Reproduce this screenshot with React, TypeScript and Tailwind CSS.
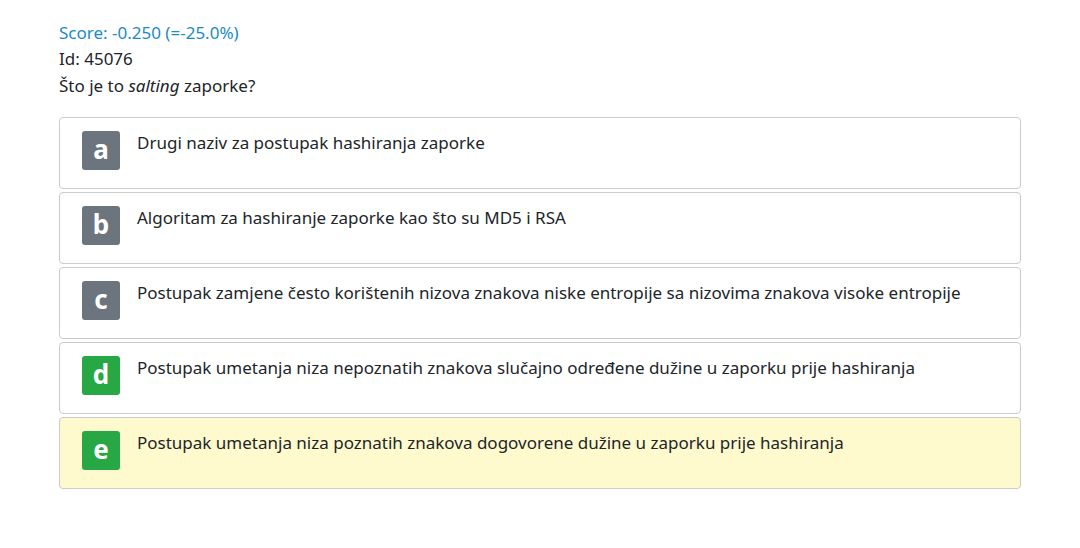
const answers = [
  { letter: 'a', text: 'Drugi naziv za postupak hashiranja zaporke', tone: 'gray', picked: false },
  { letter: 'b', text: 'Algoritam za hashiranje zaporke kao što su MD5 i RSA', tone: 'gray', picked: false },
  { letter: 'c', text: 'Postupak zamjene često korištenih nizova znakova niske entropije sa nizovima znakova visoke entropije', tone: 'gray', picked: false },
  { letter: 'd', text: 'Postupak umetanja niza nepoznatih znakova slučajno određene dužine u zaporku prije hashiranja', tone: 'green', picked: false },
  { letter: 'e', text: 'Postupak umetanja niza poznatih znakova dogovorene dužine u zaporku prije hashiranja', tone: 'green', picked: true },
]

export default function App() {
  return (
    <div className="w-[1080px] h-[548px] bg-white text-[#212529] font-['Noto_Sans',sans-serif] text-[17px]">
      <div className="pl-[59px] pr-[59px] pt-[20px]">
        <div className="leading-[26px] text-[#1b8bc6]">Score: -0.250 (=-25.0%)</div>
        <div className="leading-[26px]">Id: 45076</div>
        <div className="leading-[28px]">
          Što je to <i>salting</i> zaporke?
        </div>
        <div className="mt-[17px] flex flex-col gap-[3px]">
          {answers.map((a) => (
            <div
              key={a.letter}
              className={
                a.picked
                  ? 'h-[72px] rounded-[4px] border border-[#cbcbcb] bg-[#fffacd] flex items-start pl-[22px] pt-[13px]'
                  : 'h-[72px] rounded-[4px] border border-[#cbcbcb] bg-white flex items-start pl-[22px] pt-[13px]'
              }
            >
              <div
                className={
                  a.tone === 'green'
                    ? 'w-[38px] h-[39px] rounded-[3px] bg-[#28a745] text-white font-bold text-[26px] leading-[37px] text-center shrink-0'
                    : 'w-[38px] h-[39px] rounded-[3px] bg-[#6c757d] text-white font-bold text-[26px] leading-[37px] text-center shrink-0'
                }
              >
                {a.letter}
              </div>
              <div className="ml-[17px] leading-[26px] -mt-[1px]">{a.text}</div>
            </div>
          ))}
        </div>
      </div>
    </div>
  )
}
